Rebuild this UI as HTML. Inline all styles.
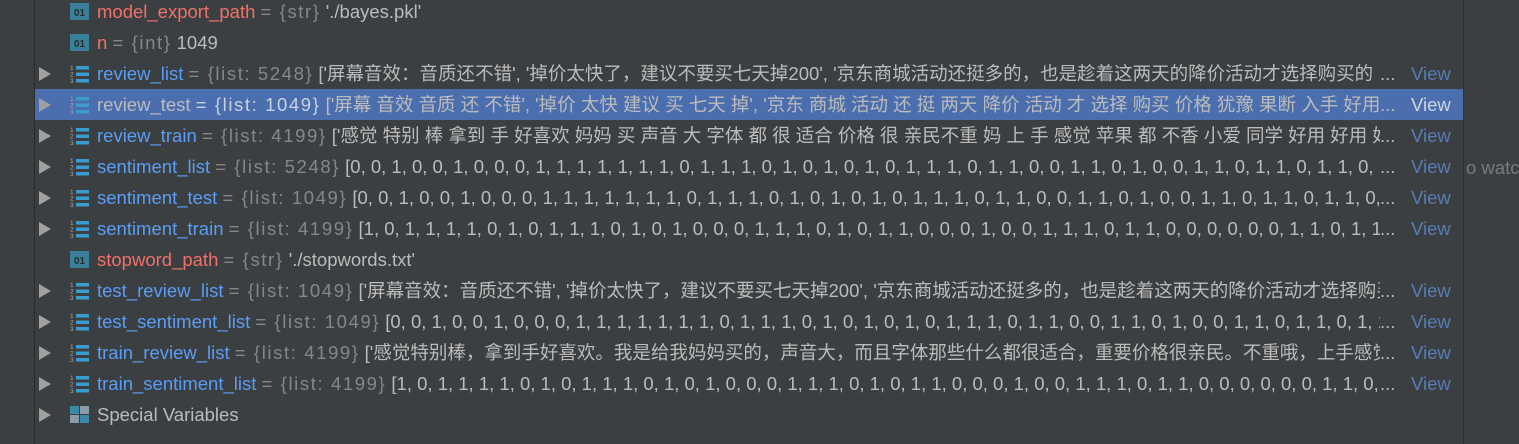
<!DOCTYPE html>
<html><head><meta charset="utf-8"><style>
body{margin:0;width:1519px;height:444px;background:#3c3f41;overflow:hidden;position:relative;font-family:"Liberation Sans","Noto Sans CJK SC",sans-serif;font-size:18.5px;}
.gut{position:absolute;left:0;top:0;width:34px;height:444px;background:#3c3f41;border-right:1px solid #2b2b2b;}
.rdiv{position:absolute;left:1463px;top:0;width:1px;height:444px;background:#323232;}
.row{position:absolute;left:35px;width:1428px;height:31px;line-height:31px;white-space:nowrap;}
.sel{background:#4b6eaf;}
.arr{position:absolute;left:4px;top:9px;width:0;height:0;border-left:12px solid #a0a0a0;border-top:7px solid transparent;border-bottom:7px solid transparent;}
.ic{position:absolute;left:35px;top:6px;width:19px;height:19px;}
.txt{position:absolute;left:62px;top:0;width:1283px;overflow:hidden;color:#bbbbbb;}
.r{color:#f0706b}.b{color:#5a9df5}.t{color:#878787;letter-spacing:1.6px}
.sel .b{color:#bbbbbb}.sel .t{color:#c9d1de}
.dots{position:absolute;left:1345px;color:#bbbbbb}
.view{position:absolute;left:1376px;color:#587cb4}
.sel .view{color:#d0d6e0}
.watch{position:absolute;left:1466px;top:152px;line-height:31px;color:#7a7a7a;font-size:18.5px;white-space:nowrap}
</style></head><body>
<div class="gut"></div>
<div class="rdiv"></div>
<div class="watch">o watc</div>

<svg width="0" height="0" style="position:absolute"><defs><g id="li"><text x="0" y="6" font-size="6.5" fill="#aaa" font-family="Liberation Sans">1</text><text x="0" y="12.5" font-size="6.5" fill="#aaa" font-family="Liberation Sans">2</text><text x="0" y="19" font-size="6.5" fill="#aaa" font-family="Liberation Sans">3</text><rect x="6" y="2" width="13" height="3.5" fill="#3a9ccf"/><rect x="6" y="8.5" width="13" height="3.5" fill="#3a9ccf"/><rect x="6" y="15" width="13" height="3.5" fill="#3a9ccf"/></g>
<g id="o1"><rect x="0" y="1" width="19" height="17" fill="#3a7f99"/><text x="9.5" y="14" font-size="10" font-family="Liberation Sans" font-weight="bold" text-anchor="middle" fill="#2b2b2b">01</text></g></defs></svg>

<div class="row" style="top:-4px"><svg class="ic" viewBox="0 0 19 19"><use href="#o1"/></svg><div class="txt"><span class="r">model_export_path</span> <span class="t">= {str}</span> './bayes.pkl'</div></div>
<div class="row" style="top:27px"><svg class="ic" viewBox="0 0 19 19"><use href="#o1"/></svg><div class="txt"><span class="r">n</span> <span class="t">= {int}</span> 1049</div></div>

<div class="row" style="top:58px"><div class="arr"></div><svg class="ic" viewBox="0 0 19 19"><use href="#li"/></svg><div class="txt"><span class="b">review_list</span> <span class="t">= {list: 5248}</span> ['屏幕音效：音质还不错', '掉价太快了，建议不要买七天掉200', '京东商城活动还挺多的，也是趁着这两天的降价活动才选择购买的</div><span class="dots">...</span><span class="view">View</span></div>
<div class="row sel" style="top:89px"><div class="arr"></div><svg class="ic" viewBox="0 0 19 19"><use href="#li"/></svg><div class="txt"><span class="b">review_test</span> <span class="t">= {list: 1049}</span> ['屏幕 音效 音质 还 不错', '掉价 太快 建议 买 七天 掉', '京东 商城 活动 还 挺 两天 降价 活动 才 选择 购买 价格 犹豫 果断 入手 好用</div><span class="dots">...</span><span class="view">View</span></div>
<div class="row" style="top:120px"><div class="arr"></div><svg class="ic" viewBox="0 0 19 19"><use href="#li"/></svg><div class="txt"><span class="b">review_train</span> <span class="t">= {list: 4199}</span> ['感觉 特别 棒 拿到 手 好喜欢 妈妈 买 声音 大 字体 都 很 适合 价格 很 亲民不重 妈 上 手 感觉 苹果 都 不香 小爱 同学 好用 好用 好用</div><span class="dots">...</span><span class="view">View</span></div>
<div class="row" style="top:151px"><div class="arr"></div><svg class="ic" viewBox="0 0 19 19"><use href="#li"/></svg><div class="txt"><span class="b">sentiment_list</span> <span class="t">= {list: 5248}</span> [0, 0, 1, 0, 0, 1, 0, 0, 0, 1, 1, 1, 1, 1, 1, 1, 0, 1, 1, 1, 0, 1, 0, 1, 0, 1, 0, 1, 1, 1, 0, 1, 1, 0, 0, 1, 1, 0, 1, 0, 0, 1, 1, 0, 1, 1, 0, 1, 1, 0, 1, 1, 0, 1</div><span class="dots">...</span><span class="view">View</span></div>
<div class="row" style="top:182px"><div class="arr"></div><svg class="ic" viewBox="0 0 19 19"><use href="#li"/></svg><div class="txt"><span class="b">sentiment_test</span> <span class="t">= {list: 1049}</span> [0, 0, 1, 0, 0, 1, 0, 0, 0, 1, 1, 1, 1, 1, 1, 1, 0, 1, 1, 1, 0, 1, 0, 1, 0, 1, 0, 1, 1, 1, 0, 1, 1, 0, 0, 1, 1, 0, 1, 0, 0, 1, 1, 0, 1, 1, 0, 1, 1, 0, 1, 1</div><span class="dots">...</span><span class="view">View</span></div>
<div class="row" style="top:213px"><div class="arr"></div><svg class="ic" viewBox="0 0 19 19"><use href="#li"/></svg><div class="txt"><span class="b">sentiment_train</span> <span class="t">= {list: 4199}</span> [1, 0, 1, 1, 1, 1, 0, 1, 0, 1, 1, 1, 0, 1, 0, 1, 0, 0, 0, 1, 1, 1, 0, 1, 0, 1, 1, 0, 0, 0, 1, 0, 0, 1, 1, 1, 0, 1, 1, 0, 0, 0, 0, 0, 0, 1, 1, 0, 1, 1</div><span class="dots">...</span><span class="view">View</span></div>
<div class="row" style="top:244px"><svg class="ic" viewBox="0 0 19 19"><use href="#o1"/></svg><div class="txt"><span class="r">stopword_path</span> <span class="t">= {str}</span> './stopwords.txt'</div></div>
<div class="row" style="top:275px"><div class="arr"></div><svg class="ic" viewBox="0 0 19 19"><use href="#li"/></svg><div class="txt"><span class="b">test_review_list</span> <span class="t">= {list: 1049}</span> ['屏幕音效：音质还不错', '掉价太快了，建议不要买七天掉200', '京东商城活动还挺多的，也是趁着这两天的降价活动才选择购买的</div><span class="dots">...</span><span class="view">View</span></div>
<div class="row" style="top:306px"><div class="arr"></div><svg class="ic" viewBox="0 0 19 19"><use href="#li"/></svg><div class="txt"><span class="b">test_sentiment_list</span> <span class="t">= {list: 1049}</span> [0, 0, 1, 0, 0, 1, 0, 0, 0, 1, 1, 1, 1, 1, 1, 1, 0, 1, 1, 1, 0, 1, 0, 1, 0, 1, 0, 1, 1, 1, 0, 1, 1, 0, 0, 1, 1, 0, 1, 0, 0, 1, 1, 0, 1, 1, 0, 1, 1, 0, 1</div><span class="dots">...</span><span class="view">View</span></div>
<div class="row" style="top:337px"><div class="arr"></div><svg class="ic" viewBox="0 0 19 19"><use href="#li"/></svg><div class="txt"><span class="b">train_review_list</span> <span class="t">= {list: 4199}</span> ['感觉特别棒，拿到手好喜欢。我是给我妈妈买的，声音大，而且字体那些什么都很适合，重要价格很亲民。不重哦，上手感觉苹果</div><span class="dots">...</span><span class="view">View</span></div>
<div class="row" style="top:368px"><div class="arr"></div><svg class="ic" viewBox="0 0 19 19"><use href="#li"/></svg><div class="txt"><span class="b">train_sentiment_list</span> <span class="t">= {list: 4199}</span> [1, 0, 1, 1, 1, 1, 0, 1, 0, 1, 1, 1, 0, 1, 0, 1, 0, 0, 0, 1, 1, 1, 0, 1, 0, 1, 1, 0, 0, 0, 1, 0, 0, 1, 1, 1, 0, 1, 1, 0, 0, 0, 0, 0, 0, 1, 1, 0, 1</div><span class="dots">...</span><span class="view">View</span></div>
<div class="row" style="top:399px"><div class="arr"></div><svg class="ic" viewBox="0 0 19 19"><rect x="0" y="1" width="9" height="8" fill="#3a8aab"/><rect x="10" y="1" width="9" height="8" fill="#8a9ba8"/><rect x="0" y="10" width="9" height="8" fill="#8a9ba8"/><rect x="10" y="10" width="9" height="8" fill="#3a8aab"/></svg><div class="txt">Special Variables</div></div>
</body></html>
